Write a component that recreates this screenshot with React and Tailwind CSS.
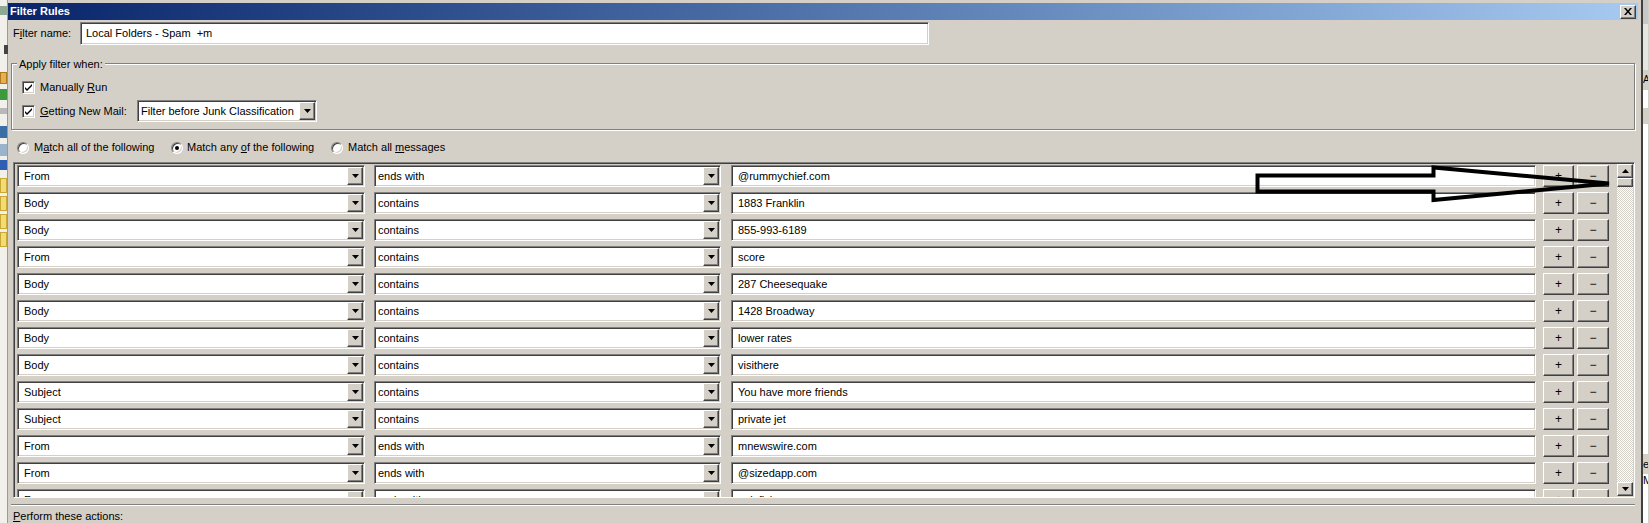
import React from "react";

const ROWS = [
  ["From", "ends with", "@rummychief.com"],
  ["Body", "contains", "1883 Franklin"],
  ["Body", "contains", "855-993-6189"],
  ["From", "contains", "score"],
  ["Body", "contains", "287 Cheesequake"],
  ["Body", "contains", "1428 Broadway"],
  ["Body", "contains", "lower rates"],
  ["Body", "contains", "visithere"],
  ["Subject", "contains", "You have more friends"],
  ["Subject", "contains", "private jet"],
  ["From", "ends with", "mnewswire.com"],
  ["From", "ends with", "@sizedapp.com"],
  ["From", "ends with", "aolafisher.com"],
];

// classic win2k bevels
const sunken =
  "border border-t-[#808080] border-l-[#808080] border-r-white border-b-white shadow-[inset_1px_1px_0_#404040,inset_-1px_-1px_0_#d4d0c8]";
const raised =
  "border border-t-white border-l-white border-r-[#404040] border-b-[#404040] shadow-[inset_-1px_-1px_0_#808080] bg-[#d4d0c8]";

function Tri({ up }) {
  return (
    <svg width="7" height="4" viewBox="0 0 7 4">
      <path d={up ? "M3.5 0L7 4H0z" : "M0 0h7L3.5 4z"} fill="#000" />
    </svg>
  );
}

function Combo({ className, textCls, children }) {
  return (
    <div className={`${sunken} ${className} h-[22px] bg-white flex items-center p-[1px]`}>
      <span className={`flex-1 truncate ${textCls}`}>{children}</span>
      <div className={`${raised} w-[16px] h-[18px] flex items-center justify-center`}>
        <Tri />
      </div>
    </div>
  );
}

function Btn({ className, children }) {
  return (
    <div className={`${raised} ${className} h-[22px] flex items-center justify-center text-[12px]`}>
      {children}
    </div>
  );
}

function Check() {
  return (
    <div className={`${sunken} w-[13px] h-[13px] bg-white flex items-center justify-center shrink-0`}>
      <svg width="7" height="7" viewBox="0 0 7 7">
        <path d="M0 3l2 2 5-5v2L2 7 0 5z" fill="#000" />
      </svg>
    </div>
  );
}

function Radio({ on }) {
  return (
    <div className="w-[12px] h-[12px] rounded-full bg-white border border-t-[#808080] border-l-[#808080] border-r-white border-b-white shadow-[inset_1px_1px_0_#404040,inset_-1px_-1px_0_#d4d0c8] flex items-center justify-center shrink-0">
      {on && <div className="w-[4px] h-[4px] rounded-full bg-black" />}
    </div>
  );
}

function LeftStrip() {
  return (
    <div className="w-[8px] h-full bg-[#f1f0ea] flex flex-col border-r border-r-[#9a9a9a] shrink-0">
      <div className="h-[6px]" />
      <div className="h-[9px] bg-[#8fa892]" />
      <div className="h-[30px]" />
      <div className="h-[9px] w-[4px] ml-[4px] bg-[#444]" />
      <div className="h-[18px]" />
      <div className="h-[12px] bg-[#e8b050] border border-[#b07a20]" />
      <div className="h-[5px]" />
      <div className="h-[11px] bg-[#3b9a3b]" />
      <div className="h-[8px]" />
      <div className="h-[6px] bg-[#b8b8b8]" />
      <div className="h-[12px]" />
      <div className="h-[12px] bg-[#3a6ea5]" />
      <div className="h-[6px]" />
      <div className="h-[12px] bg-[#9ab4cc]" />
      <div className="h-[4px]" />
      <div className="h-[10px] bg-[#2f5fb3]" />
      <div className="h-[8px]" />
      <div className="flex flex-col gap-[3px]">
        <div className="h-[15px] bg-[#f2dc78] border border-[#c9a834]" />
        <div className="h-[15px] bg-[#f2dc78] border border-[#c9a834]" />
        <div className="h-[15px] bg-[#f2dc78] border border-[#c9a834]" />
        <div className="h-[15px] bg-[#f2dc78] border border-[#c9a834]" />
      </div>
    </div>
  );
}

function RightStrip() {
  return (
    <div className="w-[7px] h-full flex flex-col border-l-2 border-l-[#404040] bg-white shrink-0">
      <div className="h-[24px] bg-[#c8c8c8]" />
      <div className="h-[46px] bg-[#e6e5e0]" />
      <div className="h-[20px] bg-[#d4d0c8] text-[10px] leading-[20px] overflow-hidden">A</div>
      <div className="h-[18px] bg-white" />
      <div className="h-[16px] bg-[#d4d0c8]" />
      <div className="h-[330px] bg-white" />
      <div className="h-[20px] bg-[#d4d0c8] text-[11px] leading-[20px] overflow-hidden">e</div>
      <div className="flex-1 bg-white text-[11px] overflow-hidden">M</div>
    </div>
  );
}

export default function App() {
  return (
    <div className="w-[1649px] h-[523px] overflow-hidden relative flex bg-[#d4d0c8] font-['Liberation_Sans',Arial,sans-serif] text-[11px] leading-[13px] text-black">
      <LeftStrip />

      <div className="w-[1633px] h-full flex flex-col pt-[3px] shrink-0">
        {/* title bar */}
        <div className="h-[18px] mr-[3px] bg-linear-to-r from-[#0a246a] to-[#a6caf0] flex items-center px-[2px]">
          <span className="font-bold text-white">Filter Rules</span>
          <div className={`${raised} ml-auto w-[16px] h-[14px] flex items-center justify-center`}>
            <svg width="8" height="7" viewBox="0 0 8 7">
              <path d="M0 0h2l2 2.5L6 0h2L5 3.5 8 7H6L4 4.5 2 7H0l3-3.5z" fill="#000" />
            </svg>
          </div>
        </div>

        <div className="flex flex-col pl-[3px] pr-[6px]">
          {/* filter name */}
          <div className="mt-[2px] flex items-center h-[23px]">
            <span className="w-[69px] pl-[2px]">
              F<u>i</u>lter name:
            </span>
            <div className={`${sunken} w-[849px] h-[23px] bg-white flex items-center pl-[5px] whitespace-pre`}>
              Local Folders - Spam  +m
            </div>
          </div>

          {/* apply filter when */}
          <div className="mt-[18px] border border-[#808080] shadow-[1px_1px_0_#fff,inset_1px_1px_0_#fff] pl-[10px] pb-[7px]">
            <span className="block w-fit -mt-[6px] -ml-[5px] px-[2px] bg-[#d4d0c8] h-[13px]">
              Apply filter when:
            </span>
            <div className="mt-[10px] flex items-center h-[13px]">
              <Check />
              <span className="ml-[5px]">
                Manually <u>R</u>un
              </span>
            </div>
            <div className="mt-[6px] flex items-center h-[22px]">
              <Check />
              <span className="ml-[5px] w-[97px]">
                <u>G</u>etting New Mail:
              </span>
              <Combo className="w-[180px]" textCls="pl-[2px]">
                Filter before Junk Classification
              </Combo>
            </div>
          </div>

          {/* match radios */}
          <div className="mt-[11px] pl-[6px] flex items-center h-[13px]">
            <div className="w-[154px] flex items-center">
              <Radio />
              <span className="ml-[5px]">
                M<u>a</u>tch all of the following
              </span>
            </div>
            <div className="w-[160px] flex items-center">
              <Radio on />
              <span className="ml-[4px]">
                Match any <u>o</u>f the following
              </span>
            </div>
            <div className="flex items-center">
              <Radio />
              <span className="ml-[5px]">
                Match all <u>m</u>essages
              </span>
            </div>
          </div>

          {/* rule list */}
          <div className={`${sunken} mt-[8px] ml-[2px] h-[336px] bg-[#d4d0c8] flex`}>
            <div className="flex-1 flex flex-col gap-[5px] pt-[2px] pl-[3px] pr-[8px] overflow-hidden">
              {ROWS.map(([a, b, c], i) => (
                <div key={i} className="flex items-center h-[22px] shrink-0">
                  <Combo className="w-[348px]" textCls="pl-[5px]">{a}</Combo>
                  <Combo className="w-[347px] ml-[9px]" textCls="pl-[2px]">{b}</Combo>
                  <div className={`${sunken} flex-1 ml-[10px] h-[22px] bg-white flex items-center pl-[6px]`}>{c}</div>
                  <Btn className="w-[31px] ml-[7px]">+</Btn>
                  <Btn className="w-[32px] ml-[3px]">−</Btn>
                </div>
              ))}
            </div>
            <div className="w-[16px] flex flex-col py-[1px] mr-[1px]">
              <div className={`${raised} h-[14px] flex items-center justify-center`}>
                <Tri up />
              </div>
              <div className={`${raised} h-[9px]`} />
              <div className="flex-1 bg-[image:repeating-conic-gradient(#ffffff_0%_25%,#d4d0c8_0%_50%)] bg-[length:2px_2px]" />
              <div className={`${raised} h-[14px] flex items-center justify-center`}>
                <Tri />
              </div>
            </div>
          </div>

          {/* separator */}
          <div className="mt-[6px] h-[2px] border-t border-t-[#808080] border-b border-b-white" />
          <div className="mt-[4px] pl-[2px] h-[13px]">
            <u>P</u>erform these actions:
          </div>
        </div>
      </div>

      <RightStrip />

      {/* hand-drawn annotation arrow */}
      <svg className="absolute left-0 top-0 pointer-events-none" width="1649" height="523">
        <polygon
          points="1257.5,175.5 1433.5,175.5 1433.5,167.5 1609,183.5 1433.5,200 1433.5,191.5 1257.5,191.5"
          fill="none"
          stroke="#000"
          strokeWidth="4"
          strokeLinejoin="miter"
        />
      </svg>
    </div>
  );
}
